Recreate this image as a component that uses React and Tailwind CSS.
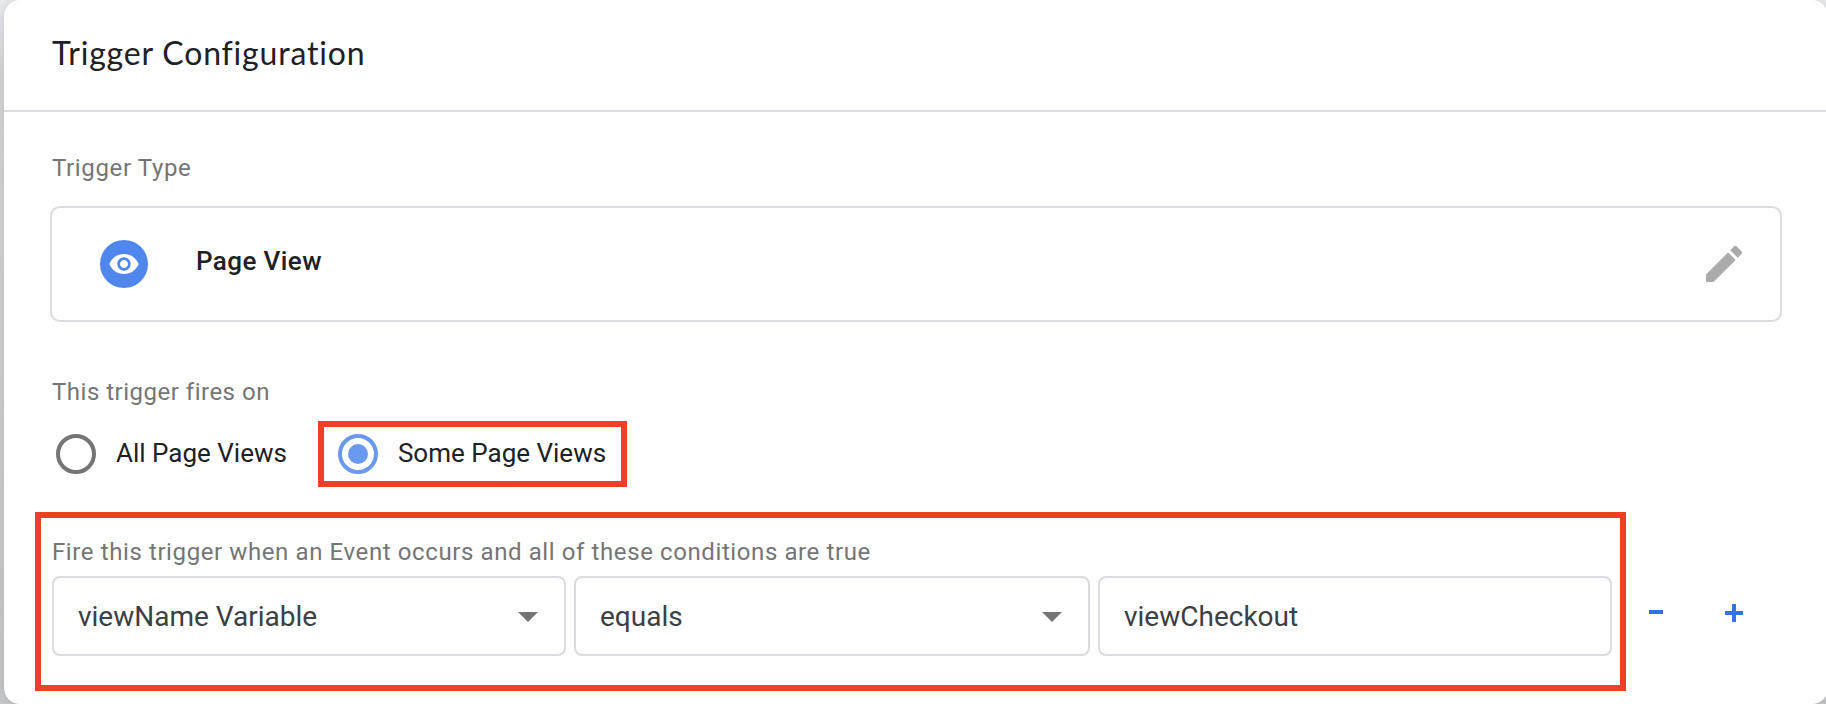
import React, { useState } from 'react';
import { MdRemoveRedEye, MdEdit } from 'react-icons/md';

const options = [
  { value: 'all', label: 'All Page Views' },
  { value: 'some', label: 'Some Page Views' },
];

function Highlight({ className }) {
  return <div className={`absolute border-[6px] border-[#ee4026] pointer-events-none ${className}`} />;
}

function Caret() {
  return (
    <svg className="mt-0.5" width="20" height="10" viewBox="0 0 20 10" fill="#757575">
      <path d="M0 0h20L10 10z" />
    </svg>
  );
}

function Field({ children, caret, className }) {
  return (
    <div className={`flex shrink-0 items-center justify-between h-20 border-2 border-[#dadce0] rounded-lg pl-6 pr-[26px] text-[28px] text-[#3c4043] ${className}`}>
      <span className="pt-0.5">{children}</span>
      {caret && <Caret />}
    </div>
  );
}

export default function App() {
  const [firesOn, setFiresOn] = useState('some');

  return (
    <div className="h-[704px] w-full overflow-hidden bg-linear-to-b from-[#e8eaed] via-[#d3d4d6] via-10% to-[#c4c5c6] pl-1 font-[Roboto,sans-serif] text-[#202124]">
      <div className="h-[704px] w-[1824px] bg-white rounded-2xl shadow-[0_0_8px_rgba(0,0,0,0.1)]">
        {/* Header */}
        <header className="flex items-center h-28 pb-1 pl-12 border-b-2 border-[#dadce0]">
          <h2 className="text-[32px] leading-[40px] tracking-[0.82px] font-[Lato,sans-serif]">Trigger Configuration</h2>
        </header>

        <div className="pl-12 pt-[42px]">
          <h3 className="text-2xl leading-7 tracking-[0.64px] text-[#757575]">Trigger Type</h3>

          {/* Trigger type card */}
          <div className="flex items-center w-[1732px] h-[116px] mt-6 -ml-0.5 pl-12 pr-8 border-2 border-[#dadce0] rounded-[10px]">
            <div className="flex items-center justify-center size-12 rounded-full bg-[#4f87ed] text-white">
              <MdRemoveRedEye size={32} />
            </div>
            <span className="ml-12 -mt-1.5 text-[26px] leading-8 font-medium tracking-[0.4px]">Page View</span>
            <button className="ml-auto text-[#aaaaaa]">
              <MdEdit size={48} />
            </button>
          </div>

          <h3 className="mt-[56px] text-2xl leading-7 tracking-[0.5px] text-[#757575]">This trigger fires on</h3>

          {/* Radio group */}
          <div className="flex items-center h-10 mt-7 pl-1 gap-[51px]">
            {options.map((opt) => (
              <button
                key={opt.value}
                onClick={() => setFiresOn(opt.value)}
                className="relative flex items-center gap-5 h-10"
              >
                <span
                  className={`flex items-center justify-center size-10 rounded-full border-4 ${
                    firesOn === opt.value ? 'border-[#6a9af0]' : 'border-[#757575]'
                  }`}
                >
                  {firesOn === opt.value && <span className="size-5 rounded-full bg-[#6a9af0]" />}
                </span>
                <span className="-mt-0.5 text-[26px] leading-8 whitespace-nowrap">{opt.label}</span>
                {opt.value === 'some' && <Highlight className="-left-5 -right-[21px] -top-[13px] -bottom-[13px]" />}
              </button>
            ))}
          </div>

          {/* Conditions */}
          <div className="flex items-end mt-[64px]">
            <div className="relative w-[1560px]">
              <h3 className="text-2xl leading-7 tracking-[0.6px] text-[#757575]">
                Fire this trigger when an Event occurs and all of these conditions are true
              </h3>
              <div className="flex mt-2.5 gap-2">
                <Field className="w-[514px]" caret>viewName Variable</Field>
                <Field className="w-[516px]" caret>equals</Field>
                <Field className="w-[514px]">viewCheckout</Field>
              </div>
              <Highlight className="-left-[17px] -right-[14px] -top-[26px] -bottom-[35px]" />
            </div>
            <div className="flex items-center h-20 pb-[6px] pl-[37px] gap-[62px]">
              <button className="pb-[3px]">
                <svg width="14" height="4" fill="#3274e0">
                  <path d="M0 0h14v4H0z" />
                </svg>
              </button>
              <button>
                <svg width="18" height="18" fill="#3274e0">
                  <path d="M7 0h4v7h7v4h-7v7H7v-7H0V7h7z" />
                </svg>
              </button>
            </div>
          </div>
        </div>
      </div>
    </div>
  );
}
